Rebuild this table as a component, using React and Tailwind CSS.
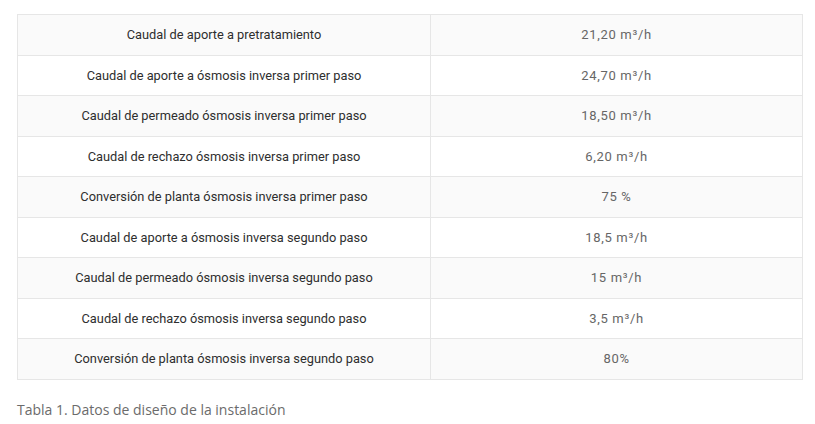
const ROWS = [
  ["Caudal de aporte a pretratamiento", "21,20 m³/h"],
  ["Caudal de aporte a ósmosis inversa primer paso", "24,70 m³/h"],
  ["Caudal de permeado ósmosis inversa primer paso", "18,50 m³/h"],
  ["Caudal de rechazo ósmosis inversa primer paso", "6,20 m³/h"],
  ["Conversión de planta ósmosis inversa primer paso", "75 %"],
  ["Caudal de aporte a ósmosis inversa segundo paso", "18,5 m³/h"],
  ["Caudal de permeado ósmosis inversa segundo paso", "15 m³/h"],
  ["Caudal de rechazo ósmosis inversa segundo paso", "3,5 m³/h"],
  ["Conversión de planta ósmosis inversa segundo paso", "80%"],
];

const App = () => {
  return (
    <div className="bg-white w-[815px] h-[424px] pt-[14px] pl-[17px] font-['Roboto',sans-serif]">
      <table className="w-[786px] border-collapse border border-[#e6e6e6] table-fixed">
        <tbody>
          {ROWS.map(([label, value], i) => (
            <tr key={label} className={i % 2 === 0 ? "bg-[#fafafa]" : "bg-white"}>
              <td className="w-[413px] h-[40.5px] border border-[#e6e6e6] text-center text-[12.8px] text-[#2e2e2e] p-0">
                {label}
              </td>
              <td className="h-[40.5px] border border-[#e6e6e6] text-center text-[13px] tracking-[0.7px] text-[#666] p-0">
                {value}
              </td>
            </tr>
          ))}
        </tbody>
      </table>
      <p className="mt-[19px] text-[14px] text-[#6b6b6b] font-['Open_Sans',sans-serif]">Tabla 1. Datos de diseño de la instalación</p>
    </div>
  );
};

export default App;
